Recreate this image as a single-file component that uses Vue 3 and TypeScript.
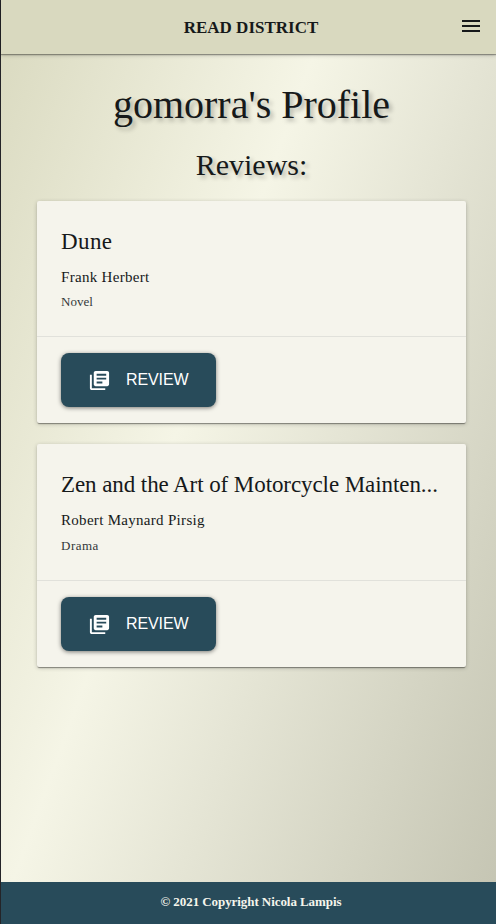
<script setup lang="ts">
interface Review {
  title: string
  author: string
  genre: string
}

const user = 'gomorra'
const reviews: Review[] = [
  { title: 'Dune', author: 'Frank Herbert', genre: 'Novel' },
  {
    title: 'Zen and the Art of Motorcycle Mainten...',
    author: 'Robert Maynard Pirsig',
    genre: 'Drama',
  },
]
</script>

<template>
  <div class="page">
    <header class="bar">
      <span class="brand">READ DISTRICT</span>
      <button class="menu" aria-label="Menu">
        <svg viewBox="0 0 24 24"><path d="M3 18h18v-2H3v2zm0-5h18v-2H3v2zm0-7v2h18V6H3z" /></svg>
      </button>
    </header>
    <main class="content">
      <h1 class="heading">{{ user }}'s Profile</h1>
      <h2 class="subheading">Reviews:</h2>
      <article v-for="review in reviews" :key="review.title" class="card">
        <div class="info">
          <h3 class="title">{{ review.title }}</h3>
          <p class="author">{{ review.author }}</p>
          <p class="genre">{{ review.genre }}</p>
        </div>
        <div class="actions">
          <button class="review">
            <svg viewBox="0 0 24 24">
              <path d="M4 6H2v14c0 1.1.9 2 2 2h14v-2H4V6zm16-4H8c-1.1 0-2 .9-2 2v12c0 1.1.9 2 2 2h12c1.1 0 2-.9 2-2V4c0-1.1-.9-2-2-2zm-1 9H9V9h10v2zm-4 4H9v-2h6v2zm4-8H9V5h10v2z" />
            </svg>
            <span>REVIEW</span>
          </button>
        </div>
      </article>
    </main>
    <footer class="footer"><span>© 2021 Copyright Nicola Lampis</span></footer>
  </div>
</template>

<style>
body {
  margin: 0;
}
</style>

<style scoped>
.page {
  box-sizing: border-box;
  height: 924px;
  display: flex;
  flex-direction: column;
  border-left: 1px solid #242428;
  background: linear-gradient(110deg, #d9d9bf 0%, #f5f5e6 40%, #c4c4b2 100%);
  font-family: "Liberation Serif", serif;
  color: #16191a;
}
.bar {
  box-sizing: border-box;
  height: 54px;
  flex: none;
  display: grid;
  grid-template-columns: 1fr auto 1fr;
  align-items: center;
  padding: 0 13px;
  background: #d9d9bf;
  box-shadow: 0 1px 1px rgba(0, 0, 0, 0.3), 0 1px 4px rgba(0, 0, 0, 0.25);
}
.brand {
  grid-column: 2;
  padding: 2px 0 0 5px;
  font-size: 17px;
  line-height: 24px;
  font-weight: 700;
}
.menu {
  justify-self: end;
  width: 24px;
  height: 24px;
  padding: 0;
  border: 0;
  background: none;
  margin-top: -2px;
}
svg {
  display: block;
  width: 24px;
  height: 24px;
  fill: currentColor;
}
.menu svg {
  color: #16191a;
}
.content {
  flex: 1;
  padding: 23px 30px 0 36px;
}
.heading,
.subheading {
  margin: 0;
  text-align: center;
  font-weight: 400;
  text-shadow: 3px 3px 4px rgba(0, 0, 0, 0.25);
}
.heading {
  font-size: 40px;
  line-height: 56px;
}
.subheading {
  margin-top: 12px;
  font-size: 30px;
  line-height: 40px;
}
.card {
  box-sizing: border-box;
  height: 222px;
  margin-top: 16px;
  border-radius: 2px;
  background: #f5f4ec;
  box-shadow: 0 2px 1px -1px rgba(0, 0, 0, 0.25), 0 1px 1px rgba(0, 0, 0, 0.16), 0 1px 4px rgba(0, 0, 0, 0.22);
}
.card + .card {
  height: 223px;
  margin-top: 21px;
}
.info {
  box-sizing: border-box;
  height: 136px;
  padding: 25px 24px 0;
  border-bottom: 1px solid #e1e1db;
}
.card + .card .info {
  height: 137px;
}
.title,
.author,
.genre {
  margin: 0;
  font-weight: 400;
  white-space: nowrap;
}
.title {
  font-size: 23px;
  line-height: 32px;
  letter-spacing: 0.4px;
}
.card + .card .title {
  letter-spacing: -0.08px;
}
.author {
  margin-top: 7px;
  font-size: 15px;
  line-height: 24px;
  letter-spacing: 0.3px;
}
.genre {
  margin-top: 3px;
  font-size: 13px;
  line-height: 20px;
  letter-spacing: 0;
  color: #33383a;
}
.card + .card .genre {
  margin-top: 4px;
  letter-spacing: 0.5px;
}
.actions {
  padding: 16px 24px;
}
.review {
  width: 155px;
  height: 54px;
  display: flex;
  align-items: center;
  gap: 15px;
  padding: 0 0 0 27px;
  border: 0;
  border-radius: 8px;
  background: #284b5a;
  color: #fff;
  font: 16px/24px "Liberation Sans", sans-serif;
  letter-spacing: -0.1px;
  box-shadow: 0 1px 4px rgba(0, 0, 0, 0.5);
}
.review svg {
  width: 23px;
  height: 23px;
}
.footer {
  box-sizing: border-box;
  flex: none;
  height: 42px;
  display: flex;
  align-items: center;
  justify-content: center;
  padding: 0 0 2px 5px;
  background: #284b5a;
  color: #f5f5ec;
  font-size: 13px;
  line-height: 20px;
  font-weight: 700;
  letter-spacing: -0.07px;
}
</style>
